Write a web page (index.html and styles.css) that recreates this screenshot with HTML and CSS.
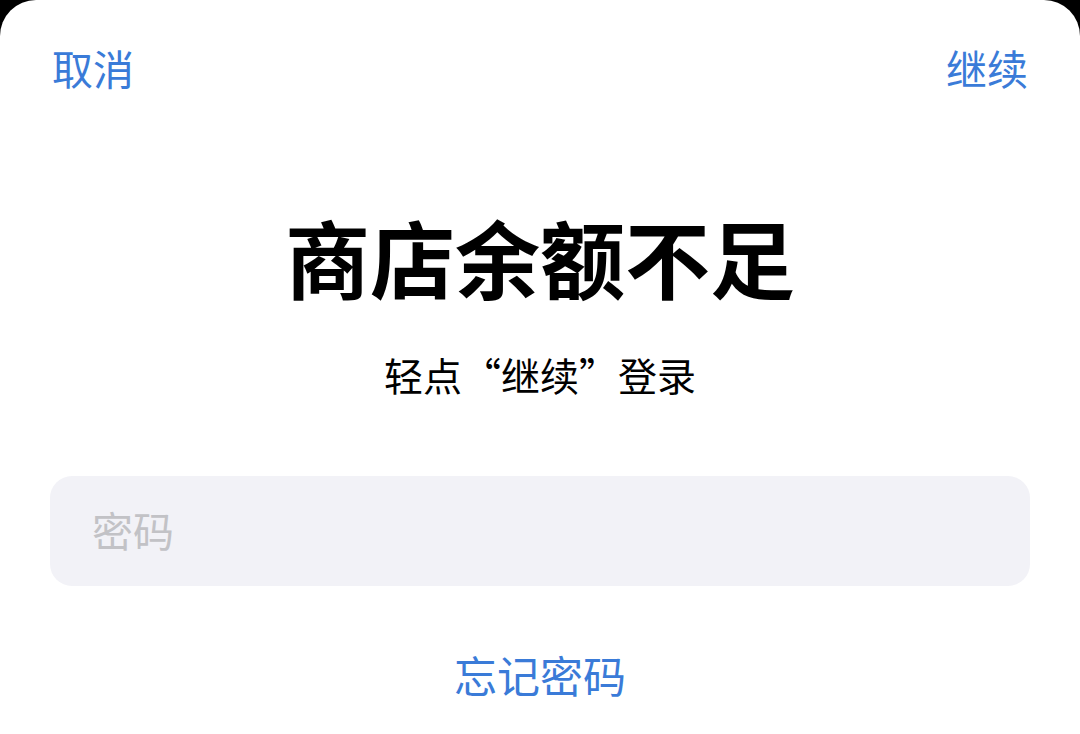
FILE: index.html
```html
<!DOCTYPE html>
<html lang="zh-CN">
<head>
<meta charset="utf-8">
<title>商店余额不足</title>
<link rel="stylesheet" href="styles.css">
</head>
<body>
<div class="sheet">
  <div class="nav">
    <span class="nav-btn">取消</span>
    <span class="nav-btn">继续</span>
  </div>
  <h1 class="title">商店余额不足</h1>
  <p class="subtitle">轻点“继续”登录</p>
  <div class="field">
    <span class="placeholder">密码</span>
  </div>
  <div class="forgot">忘记密码</div>
</div>
</body>
</html>
```
FILE: styles.css
```css
html, body {
  margin: 0;
  padding: 0;
  background: #000;
}
body {
  width: 1080px;
  height: 734px;
  overflow: hidden;
  font-family: "Noto Sans CJK SC", "Noto Sans", sans-serif;
}
.sheet {
  height: 734px;
  background: #fff;
  border-radius: 36px 36px 0 0;
  display: flex;
  flex-direction: column;
}
.nav {
  display: flex;
  justify-content: space-between;
  padding: 47px 52px 0 52px;
}
.nav-btn {
  font-size: 41px;
  line-height: 41px;
  color: #3a7bd8;
}
.title {
  margin: 125px 0 0 0;
  text-align: center;
  font-size: 85px;
  line-height: 85px;
  font-weight: 700;
  color: #000;
}
.subtitle {
  margin: 57px 0 0 0;
  text-align: center;
  font-size: 39px;
  line-height: 39px;
  color: #000;
}
.field {
  margin: 82px 50px 0 50px;
  height: 110px;
  border-radius: 22px;
  background: #f2f2f7;
  display: flex;
  align-items: center;
  padding-left: 42px;
}
.placeholder {
  font-size: 41px;
  line-height: 41px;
  color: #c2c2c6;
  margin-top: -4px;
}
.forgot {
  margin-top: 67px;
  text-align: center;
  font-size: 43px;
  line-height: 43px;
  color: #3a7bd8;
}
```
